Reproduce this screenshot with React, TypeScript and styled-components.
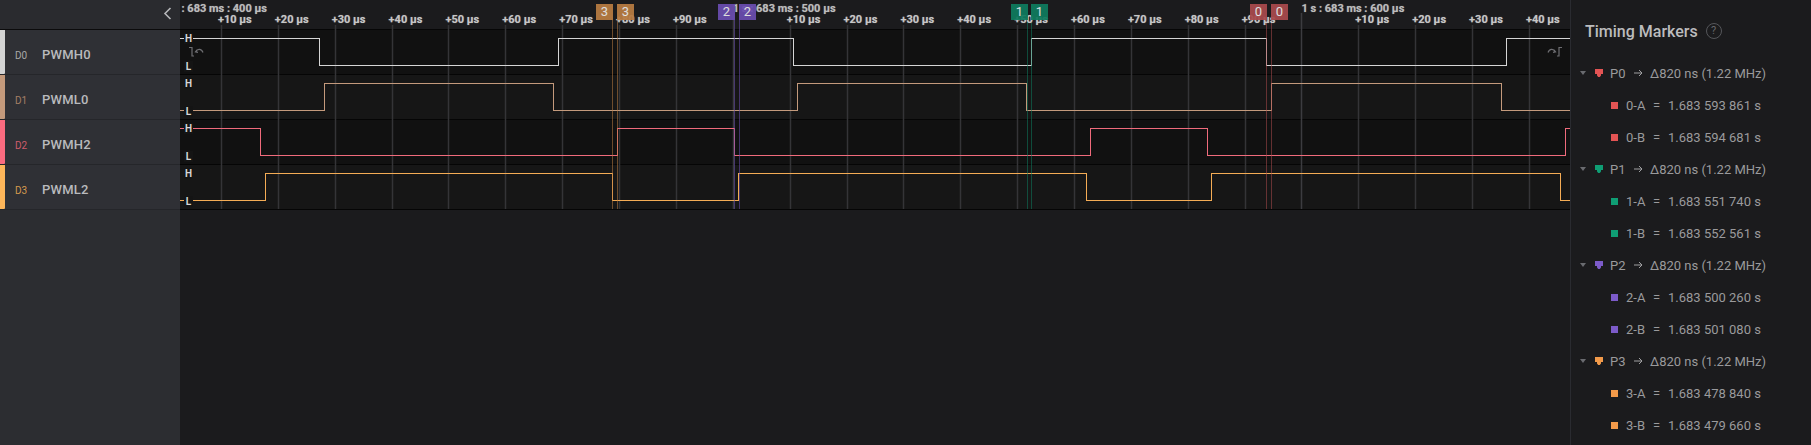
import React from "react";
import styled, { createGlobalStyle } from "styled-components";

const Global = createGlobalStyle`
  html, body { margin: 0; padding: 0; background: #1b1b1d; overflow: hidden; }
  #root { width: 1811px; height: 445px; }
  * { box-sizing: border-box; }
`;

const Page = styled.div`
  display: flex;
  width: 1811px;
  height: 445px;
  font-family: Roboto, "Liberation Sans", sans-serif;
  background: #1b1b1d;
`;

const Sidebar = styled.aside`
  width: 180px;
  flex: none;
  background: #2c2d31;
  display: flex;
  flex-direction: column;
`;

const SideHeader = styled.div`
  height: 30px;
  border-bottom: 1px solid #0b0b0c;
  display: flex;
  align-items: flex-start;
  justify-content: flex-end;
  padding: 7px 8px 0 0;
  background: #2a2b2f;
`;

const ChannelRow = styled.div`
  height: 45px;
  display: flex;
  align-items: stretch;
  background: #2f3035;
  border-bottom: 1px solid #25262a;
`;

const Strip = styled.div<{ $c: string }>`
  width: 5px;
  background: ${(p) => p.$c};
  border-radius: 0 0 1px 0;
`;

const ChannelIndex = styled.span<{ $c: string }>`
  width: 37px;
  padding: 19px 0 0 10px;
  font-size: 10px;
  line-height: 14px;
  color: ${(p) => p.$c};
`;

const ChannelName = styled.span`
  font-size: 13px;
  font-weight: 500;
  line-height: 16px;
  padding-top: 17px;
  color: #b9babd;
  letter-spacing: 0.2px;
`;

const Wave = styled.main`
  position: relative;
  width: 1390px;
  flex: none;
  overflow: hidden;
  display: flex;
  flex-direction: column;
`;

const Ruler = styled.div`
  height: 30px;
  flex: none;
  border-bottom: 1px solid #060606;
`;

const WaveRow = styled.div<{ $alt: boolean }>`
  height: 45px;
  flex: none;
  background: ${(p) => (p.$alt ? "#161616" : "#111111")};
  border-bottom: 1px solid #050505;
`;

const Trace = styled.svg`
  position: relative;
  z-index: 2;
  display: block;
  width: 1390px;
  height: 44px;
`;

const Overlay = styled.svg<{ $z: number }>`
  position: absolute;
  z-index: ${(p) => p.$z};
  left: 0;
  top: 0;
  width: 1390px;
  height: 210px;
  pointer-events: none;
`;

const TickLabel = styled.span<{ $major?: boolean }>`
  position: absolute;
  z-index: 4;
  top: ${(p) => (p.$major ? "2px" : "13px")};
  font-size: 11px;
  line-height: 13px;
  font-weight: 700;
  white-space: nowrap;
  color: ${(p) => (p.$major ? "#bcbcbc" : "#c6c6c6")};
  text-shadow: 0 0 1px rgba(210, 210, 210, 0.55);
`;

const Flag = styled.span<{ $c: string }>`
  position: absolute;
  z-index: 5;
  top: 4px;
  width: 17px;
  height: 16px;
  background: ${(p) => p.$c};
  opacity: 0.93;
  color: #ececec;
  font-size: 13px;
  line-height: 16px;
  text-align: center;
`;

const Level = styled.span`
  position: absolute;
  z-index: 4;
  left: 4px;
  width: 9px;
  height: 11px;
  font-size: 10px;
  line-height: 11px;
  font-weight: 700;
  text-align: center;
  color: #d6d6d6;
  background: #141414;
`;

const GlyphBox = styled.svg`
  position: absolute;
  z-index: 4;
  top: 46px;
  width: 17px;
  height: 12px;
`;

const Panel = styled.aside`
  flex: 1;
  border-left: 1px solid #2a2b30;
  background: #1b1b1d;
  padding: 0 0 0 8px;
`;

const PanelTitle = styled.div`
  display: flex;
  align-items: center;
  gap: 8px;
  height: 32px;
  margin-top: 15px;
  padding-left: 6px;
`;

const TitleText = styled.h2`
  margin: 0;
  font-size: 16px;
  font-weight: 500;
  color: #bcbcbd;
`;

const Help = styled.span`
  width: 16px;
  height: 16px;
  border: 1px solid #55565a;
  border-radius: 50%;
  font-size: 11px;
  line-height: 14px;
  text-align: center;
  color: #66676b;
`;

const MarkerList = styled.div`
  margin-top: 10px;
  display: flex;
  flex-direction: column;
`;

const PairRow = styled.div`
  height: 32px;
  display: flex;
  align-items: center;
  font-size: 13px;
  color: #9a9a9c;
`;

const Caret = styled.span`
  width: 0;
  height: 0;
  margin-left: 1px;
  border-left: 3px solid transparent;
  border-right: 3px solid transparent;
  border-top: 4px solid #6a6b70;
`;

const Shield = styled.svg`
  width: 8px;
  height: 8px;
  margin-left: 9px;
  flex: none;
`;

const PairName = styled.span`
  width: 24px;
  margin-left: 7px;
`;

const Arrow = styled.svg`
  width: 9px;
  height: 8px;
  flex: none;
  margin-right: 7px;
`;

const Delta = styled.span`
  white-space: nowrap;
`;

const TimeRow = styled.div`
  height: 32px;
  display: flex;
  align-items: center;
  padding-left: 32px;
  font-size: 13px;
  color: #9a9a9c;
`;

const Square = styled.span<{ $c: string }>`
  width: 7px;
  height: 7px;
  background: ${(p) => p.$c};
  margin-right: 8px;
`;

const TimeName = styled.span`
  width: 27px;
`;

const Equals = styled.span`
  width: 15px;
`;

const channels = [
  { id: "D0", name: "PWMH0", strip: "#d4d4d4", idc: "#a8a8a8", wave: "#d6d6d6", start: 1, edges: [319.5, 558.3, 793.3, 1031.3, 1266.3, 1506.3] },
  { id: "D1", name: "PWML0", strip: "#c49a7c", idc: "#a57f66", wave: "#c49a7c", start: 0, edges: [324.3, 553.3, 797.3, 1026.3, 1271.3, 1501.3] },
  { id: "D2", name: "PWMH2", strip: "#fb6b7f", idc: "#d05c6c", wave: "#f06b7c", start: 1, edges: [260.3, 617.5, 734.3, 1090.3, 1207.3, 1565.3] },
  { id: "D3", name: "PWML2", strip: "#fdb65a", idc: "#d69a4e", wave: "#f4ac55", start: 0, edges: [265.3, 612.3, 738.3, 1086.3, 1211.3, 1560.3] },
];

const OX = 180;

function tracePoints(start: number, edges: number[]) {
  const hi = 8.5;
  const lo = 35.5;
  let level = start;
  const y = () => (level ? hi : lo);
  let pts = `0,${y()}`;
  edges.forEach((e) => {
    const x = Math.floor(e - OX) + 0.5;
    pts += ` ${x},${y()}`;
    level = level ? 0 : 1;
    pts += ` ${x},${y()}`;
  });
  pts += ` 1390,${y()}`;
  return pts;
}

const markers = [
  { n: "3", c: "#b97c42", xs: [612.5, 617.5], flags: [596, 617] },
  { n: "2", c: "#6a4db0", xs: [734.5, 739.5], flags: [718, 739] },
  { n: "1", c: "#0f7b5e", xs: [1027.5, 1031.5], flags: [1011, 1031] },
  { n: "0", c: "#a94a4d", xs: [1266.5, 1271.5], flags: [1250, 1271] },
];

const STEP = 56.87;
const G0 = 164.1;
const labels: { x: number; t: string; major: boolean; grid: number }[] = [];
for (let i = 0; i < 25; i++) {
  const grid = G0 + i * STEP;
  const m = i % 10;
  if (m === 0) {
    labels.push({ x: grid, t: `1 s : 683 ms : ${400 + i * 10} µs`, major: true, grid });
  } else {
    labels.push({ x: grid - 3, t: `+${m * 10} µs`, major: false, grid });
  }
}

const pairs = [
  { p: "P0", c: "#e35454", a: "1.683 593 861 s", b: "1.683 594 681 s", n: "0" },
  { p: "P1", c: "#0f9e74", a: "1.683 551 740 s", b: "1.683 552 561 s", n: "1" },
  { p: "P2", c: "#7c5bc9", a: "1.683 500 260 s", b: "1.683 501 080 s", n: "2" },
  { p: "P3", c: "#f29a4a", a: "1.683 478 840 s", b: "1.683 479 660 s", n: "3" },
];

const levelTops = [33, 61, 78, 106, 123, 151, 168, 196];

export default function App() {
  return (
    <Page>
      <Global />
      <Sidebar>
        <SideHeader>
          <svg width="9" height="13" viewBox="0 0 9 13" fill="none">
            <path d="M7.5 1 L2 6.5 L7.5 12" stroke="#b5b6b9" strokeWidth="1.6" />
          </svg>
        </SideHeader>
        {channels.map((c) => (
          <ChannelRow key={c.id}>
            <Strip $c={c.strip} />
            <ChannelIndex $c={c.idc}>{c.id}</ChannelIndex>
            <ChannelName>{c.name}</ChannelName>
          </ChannelRow>
        ))}
      </Sidebar>
      <Wave>
        <Ruler />
        {channels.map((c, i) => (
          <WaveRow key={c.id} $alt={i % 2 === 1}>
            <Trace viewBox="0 0 1390 44">
              <polyline points={tracePoints(c.start, c.edges)} fill="none" stroke={c.wave} strokeWidth="1" shapeRendering="crispEdges" />
            </Trace>
          </WaveRow>
        ))}
        <Overlay $z={1} viewBox="0 0 1390 210">
          {labels.map((l) => (
            <line
              key={l.t}
              x1={Math.round(l.grid - OX) + 0.5}
              x2={Math.round(l.grid - OX) + 0.5}
              y1={l.major ? 13 : 25}
              y2={209}
              stroke={l.major ? "#3c3c40" : "#343437"}
              strokeWidth="1.5"
            />
          ))}
        </Overlay>
        <Overlay $z={3} viewBox="0 0 1390 210">
          {markers.map((m) =>
            m.xs.map((x) => (
              <line key={x} x1={x - OX} x2={x - OX} y1={20} y2={209} stroke={m.c} strokeOpacity="0.55" strokeWidth="1" />
            ))
          )}
        </Overlay>
        {labels.map((l) =>
          l.x > 130 ? (
            <TickLabel key={l.t} $major={l.major} style={{ left: l.x - OX }}>
              {l.t}
            </TickLabel>
          ) : null
        )}
        {markers.map((m) =>
          m.flags.map((x) => (
            <Flag key={x} $c={m.c} style={{ left: x - OX }}>
              {m.n}
            </Flag>
          ))
        )}
        {levelTops.map((t, i) => (
          <Level key={t} style={{ top: t }}>
            {i % 2 === 0 ? "H" : "L"}
          </Level>
        ))}
        <GlyphBox style={{ left: 8 }} viewBox="0 0 17 12" fill="none" stroke="#6e6e72" strokeWidth="1.2">
          <path d="M1 1.5 H4 V10 H6" />
          <path d="M9 4 L7.5 5.8 L10 6.3 M7.7 5.7 C9.5 2.4 13.5 2.6 15 6.5" />
        </GlyphBox>
        <GlyphBox style={{ left: 1366 }} viewBox="0 0 17 12" fill="none" stroke="#6e6e72" strokeWidth="1.2">
          <path d="M16 1.5 H13 V10 H11" />
          <path d="M8 4 L9.5 5.8 L7 6.3 M9.3 5.7 C7.5 2.4 3.5 2.6 2 6.5" />
        </GlyphBox>
      </Wave>
      <Panel>
        <PanelTitle>
          <TitleText>Timing Markers</TitleText>
          <Help>?</Help>
        </PanelTitle>
        <MarkerList>
          {pairs.map((p) => (
            <React.Fragment key={p.p}>
              <PairRow>
                <Caret />
                <Shield viewBox="0 0 8 8">
                  <path d="M0 0 H8 V5 L6 5 L6 6.5 L4.8 8 H3.2 L2 6.5 L2 5 L0 5 Z" fill={p.c} />
                </Shield>
                <PairName>{p.p}</PairName>
                <Arrow viewBox="0 0 9 8" fill="none" stroke="#a0a0a2" strokeWidth="1">
                  <path d="M0 4 H8 M5 1 L8 4 L5 7" />
                </Arrow>
                <Delta>Δ820 ns (1.22 MHz)</Delta>
              </PairRow>
              <TimeRow>
                <Square $c={p.c} />
                <TimeName>{p.n}-A</TimeName>
                <Equals>=</Equals>
                <span>{p.a}</span>
              </TimeRow>
              <TimeRow>
                <Square $c={p.c} />
                <TimeName>{p.n}-B</TimeName>
                <Equals>=</Equals>
                <span>{p.b}</span>
              </TimeRow>
            </React.Fragment>
          ))}
        </MarkerList>
      </Panel>
    </Page>
  );
}
